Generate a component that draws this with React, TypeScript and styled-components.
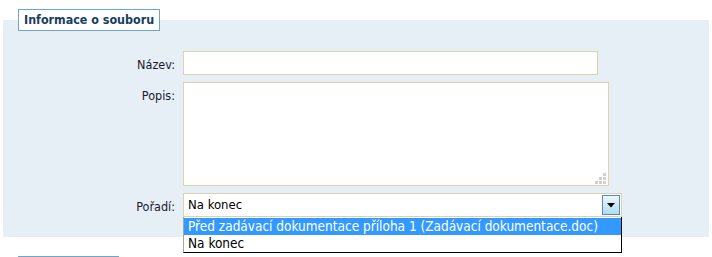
import styled, { createGlobalStyle } from 'styled-components';

const GlobalStyle = createGlobalStyle`
  html, body {
    margin: 0;
    padding: 0;
    background: #ffffff;
  }
  body {
    font-family: "DejaVu Sans Condensed", "DejaVu Sans", sans-serif;
    font-size: 12.5px;
    color: #1a1a2e;
  }
`;

const Page = styled.div`
  width: 712px;
  height: 257px;
  padding: 9px 3px 0;
  box-sizing: border-box;
  overflow: hidden;
`;

const Fieldset = styled.fieldset`
  margin: 0;
  padding: 0 0 20px;
  border: none;
  background: #e6eef6;
  min-inline-size: 0;
`;

const Legend = styled.legend`
  margin-left: 15px;
  padding: 3px 5px 4px;
  border: 1px solid #6aa6cf;
  background: #ffffff;
  color: #183e5e;
  font-weight: bold;
  font-size: 12.4px;
  line-height: 13px;
`;

const Form = styled.div`
  display: grid;
  grid-template-columns: 172px auto;
  column-gap: 8px;
  row-gap: 7px;
  padding-top: 20px;
  align-items: start;
`;

const Label = styled.label`
  text-align: right;
  padding-top: 7px;
  line-height: 14px;
  color: #1a1a2e;
`;

const Field = styled.div<{ $w: number }>`
  position: relative;
  width: ${(p) => p.$w}px;
`;

const TextInput = styled.input`
  display: block;
  width: 100%;
  height: 24px;
  box-sizing: border-box;
  border: 1px solid #dbd3ab;
  background: #ffffff;
  margin: 0;
  padding: 0 4px;
  font: inherit;
`;

const TextArea = styled.textarea`
  display: block;
  width: 100%;
  height: 104px;
  box-sizing: border-box;
  border: 1px solid #dbd3ab;
  background: #ffffff;
  margin: 0;
  padding: 3px 4px;
  font: inherit;
  resize: none;
`;

const Grip = styled.svg`
  position: absolute;
  right: 3px;
  bottom: 2px;
`;

const SelectWrap = styled.div`
  position: relative;
`;

const SelectBox = styled.div`
  display: flex;
  align-items: center;
  justify-content: space-between;
  height: 24px;
  box-sizing: border-box;
  border: 1px solid #dbd3ab;
  background: #ffffff;
  padding: 0 1px 0 4px;
  font-size: 13px;
  color: #000000;
  line-height: 14px;
`;

const ArrowButton = styled.div`
  width: 18px;
  height: 20px;
  box-sizing: border-box;
  border: 1px solid #5889b3;
  background: linear-gradient(to bottom, #eef7fd 0%, #cfe8f9 50%, #b2dbf5 100%);
  display: flex;
  align-items: center;
  justify-content: center;
`;

const List = styled.ul`
  position: absolute;
  top: 100%;
  left: 0;
  right: 0;
  margin: 0;
  padding: 1px 0 0;
  list-style: none;
  background: #ffffff;
  border-left: 1px solid #a5a5a5;
  border-right: 1px solid #000000;
  border-bottom: 1px solid #000000;
  z-index: 10;
`;

const Option = styled.li<{ $active?: boolean }>`
  height: 17px;
  line-height: 17px;
  padding: 0 4px;
  font-size: 13.5px;
  white-space: nowrap;
  background: ${(p) => (p.$active ? '#3399ff' : '#ffffff')};
  color: ${(p) => (p.$active ? '#ffffff' : '#000000')};
`;

const Footer = styled.div`
  margin: 19px 0 0 15px;
  width: 101px;
  border-top: 1px solid #6aa6cf;
`;

const gripDots = [
  [8, 0],
  [4, 4],
  [8, 4],
  [0, 8],
  [4, 8],
  [8, 8],
];

export default function App() {
  return (
    <Page>
      <GlobalStyle />
      <Fieldset>
        <Legend>Informace o souboru</Legend>
        <Form>
          <Label>Název:</Label>
          <Field $w={415}>
            <TextInput type="text" />
          </Field>

          <Label>Popis:</Label>
          <Field $w={426}>
            <TextArea />
            <Grip width="11" height="11" viewBox="0 0 11 11" aria-hidden>
              {gripDots.map(([x, y]) => (
                <rect key={`${x}-${y}`} x={x} y={y} width="3" height="3" fill="#d0d0d0" />
              ))}
            </Grip>
          </Field>

          <Label>Pořadí:</Label>
          <Field $w={439}>
            <SelectWrap>
              <SelectBox>
                <span>Na konec</span>
                <ArrowButton>
                  <svg width="8" height="5" viewBox="0 0 8 5" aria-hidden>
                    <path d="M0 0h8L4 4.5z" fill="#000" />
                  </svg>
                </ArrowButton>
              </SelectBox>
              <List>
                <Option $active>Před zadávací dokumentace příloha 1 (Zadávací dokumentace.doc)</Option>
                <Option>Na konec</Option>
              </List>
            </SelectWrap>
          </Field>
        </Form>
      </Fieldset>
      <Footer />
    </Page>
  );
}
